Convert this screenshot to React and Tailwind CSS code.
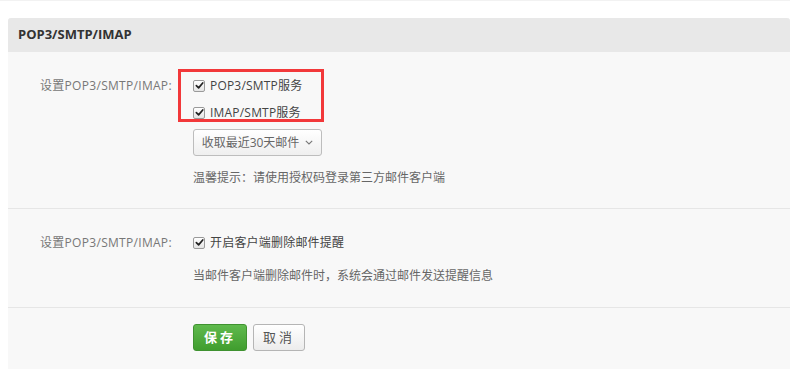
import React from 'react';

const FONT = "font-['Open_Sans','Noto_Sans_CJK_SC',sans-serif]";

function Check({ children }) {
  return (
    <label className="flex h-[27px] items-center gap-[5px] text-[12px] text-[#444]">
      <span className="flex h-3 w-3 items-center justify-center rounded-[2px] border border-[#9a9a9a] bg-gradient-to-b from-white to-[#e4e4e4]">
        <svg viewBox="0 0 10 10" className="h-[9px] w-[9px]">
          <path d="M1.5 5.2 L4 7.6 L8.6 2.2" fill="none" stroke="#222" strokeWidth="1.9" strokeLinecap="round" strokeLinejoin="round" />
        </svg>
      </span>
      <span className="tracking-[0.2px]">{children}</span>
    </label>
  );
}

function Row({ label, children, className = '' }) {
  return (
    <div className={`flex border-b border-[#e6e6e6] ${className}`}>
      <div className="w-[185px] shrink-0 pl-8">
        {label && <div className="flex h-[27px] items-center text-[12px] tracking-[0.3px] text-[#777]">{label}</div>}
      </div>
      <div className="flex-1">{children}</div>
    </div>
  );
}

export default function App() {
  return (
    <div className={`min-h-screen bg-white ${FONT}`}>
      <div className="h-px bg-[#f2f2f2]" />
      <div className="ml-2 mt-[17px] rounded-t-[3px] bg-[#f8f8f8]">
        <div className="flex h-[34px] items-center rounded-t-[3px] bg-[#e8e8e8] px-[10px] text-[13px] font-bold text-[#333]">
          POP3/SMTP/IMAP
        </div>

        <Row label="设置POP3/SMTP/IMAP:" className="pb-5 pt-[20px]">
          <div className="relative">
            <Check>POP3/SMTP服务</Check>
            <Check>IMAP/SMTP服务</Check>
            <div className="pointer-events-none absolute -left-[15px] -top-[3px] h-[53px] w-[146px] border-[3px] border-[#f2383a]" />
          </div>
          <button className="mt-[3px] flex h-[27px] w-[129px] items-center justify-center gap-[6px] rounded-[3px] border border-[#bdbdbd] bg-gradient-to-b from-white to-[#efefef] text-[12px] text-[#666]">
            <span>收取最近30天邮件</span>
            <svg viewBox="0 0 8 5" className="h-[5px] w-[8px]">
              <path d="M0.8 0.8 L4 4 L7.2 0.8" fill="none" stroke="#777" strokeWidth="1.1" />
            </svg>
          </button>
          <div className="mt-[12px] text-[12px] leading-5 text-[#666]">温馨提示：请使用授权码登录第三方邮件客户端</div>
        </Row>

        <Row label="设置POP3/SMTP/IMAP:" className="pb-[21px] pt-5">
          <Check>开启客户端删除邮件提醒</Check>
          <div className="mt-[10px] text-[12px] leading-5 text-[#666]">当邮件客户端删除邮件时，系统会通过邮件发送提醒信息</div>
        </Row>

        <div className="flex pb-[18px] pt-4">
          <div className="w-[185px] shrink-0" />
          <div className="flex gap-[6px]">
            <button className="h-[27px] w-[54px] rounded-[3px] border border-[#3f9230] bg-gradient-to-b from-[#5fba4d] to-[#409d2e] text-[13px] font-bold tracking-[3px] text-white">
              保存
            </button>
            <button className="h-[27px] w-[52px] rounded-[3px] border border-[#b5b5b5] bg-gradient-to-b from-white to-[#ececec] text-[13px] tracking-[3px] text-[#555]">
              取消
            </button>
          </div>
        </div>
      </div>
    </div>
  );
}
